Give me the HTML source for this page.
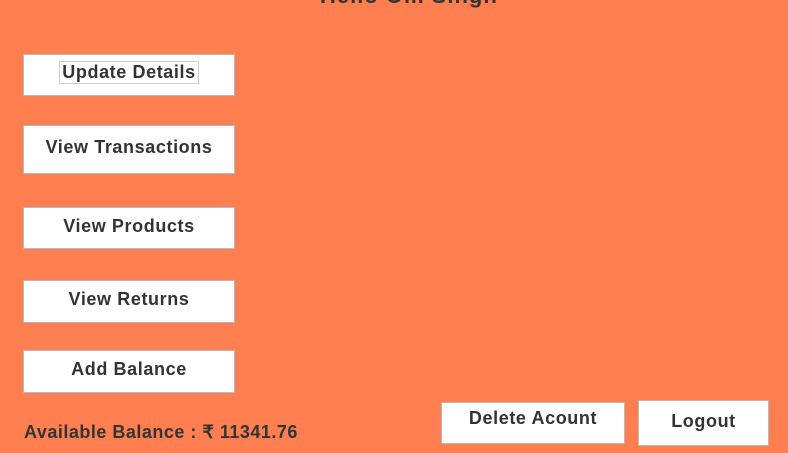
<!DOCTYPE html>
<html><head><style>
body{margin:0;width:788px;height:453px;background:#FF7F50;position:relative;overflow:hidden;font-family:"Liberation Sans",sans-serif;font-weight:bold;color:#333}
.b{position:absolute;background:#fff;border:1px solid #b8b8b8;box-sizing:border-box;display:flex;align-items:center;justify-content:center;font-size:18px;letter-spacing:0.6px;padding-bottom:4px}
.t{position:absolute}
</style></head><body>
<div class="t" style="left:320px;top:-17px;font-size:22px;letter-spacing:1px">Hello Om Singh</div>
<div class="b" style="left:23px;top:54px;width:212px;height:42px;padding-bottom:6px"><span style="border:1px solid #c8d0d8;padding:0 2px">Update Details</span></div>
<div class="b" style="left:23px;top:125px;width:212px;height:49px">View Transactions</div>
<div class="b" style="left:23px;top:207px;width:212px;height:42px">View Products</div>
<div class="b" style="left:23px;top:280px;width:212px;height:43px">View Returns</div>
<div class="b" style="left:23px;top:350px;width:212px;height:43px">Add Balance</div>
<div class="b" style="left:441px;top:402px;width:184px;height:42px;padding-bottom:10px">Delete Acount</div>
<div class="b" style="left:638px;top:400px;width:131px;height:46px;padding-bottom:4px">Logout</div>
<div class="t" style="left:24px;top:422px;font-size:18px;letter-spacing:0.5px">Available Balance : ₹ 11341.76</div>
</body></html>
